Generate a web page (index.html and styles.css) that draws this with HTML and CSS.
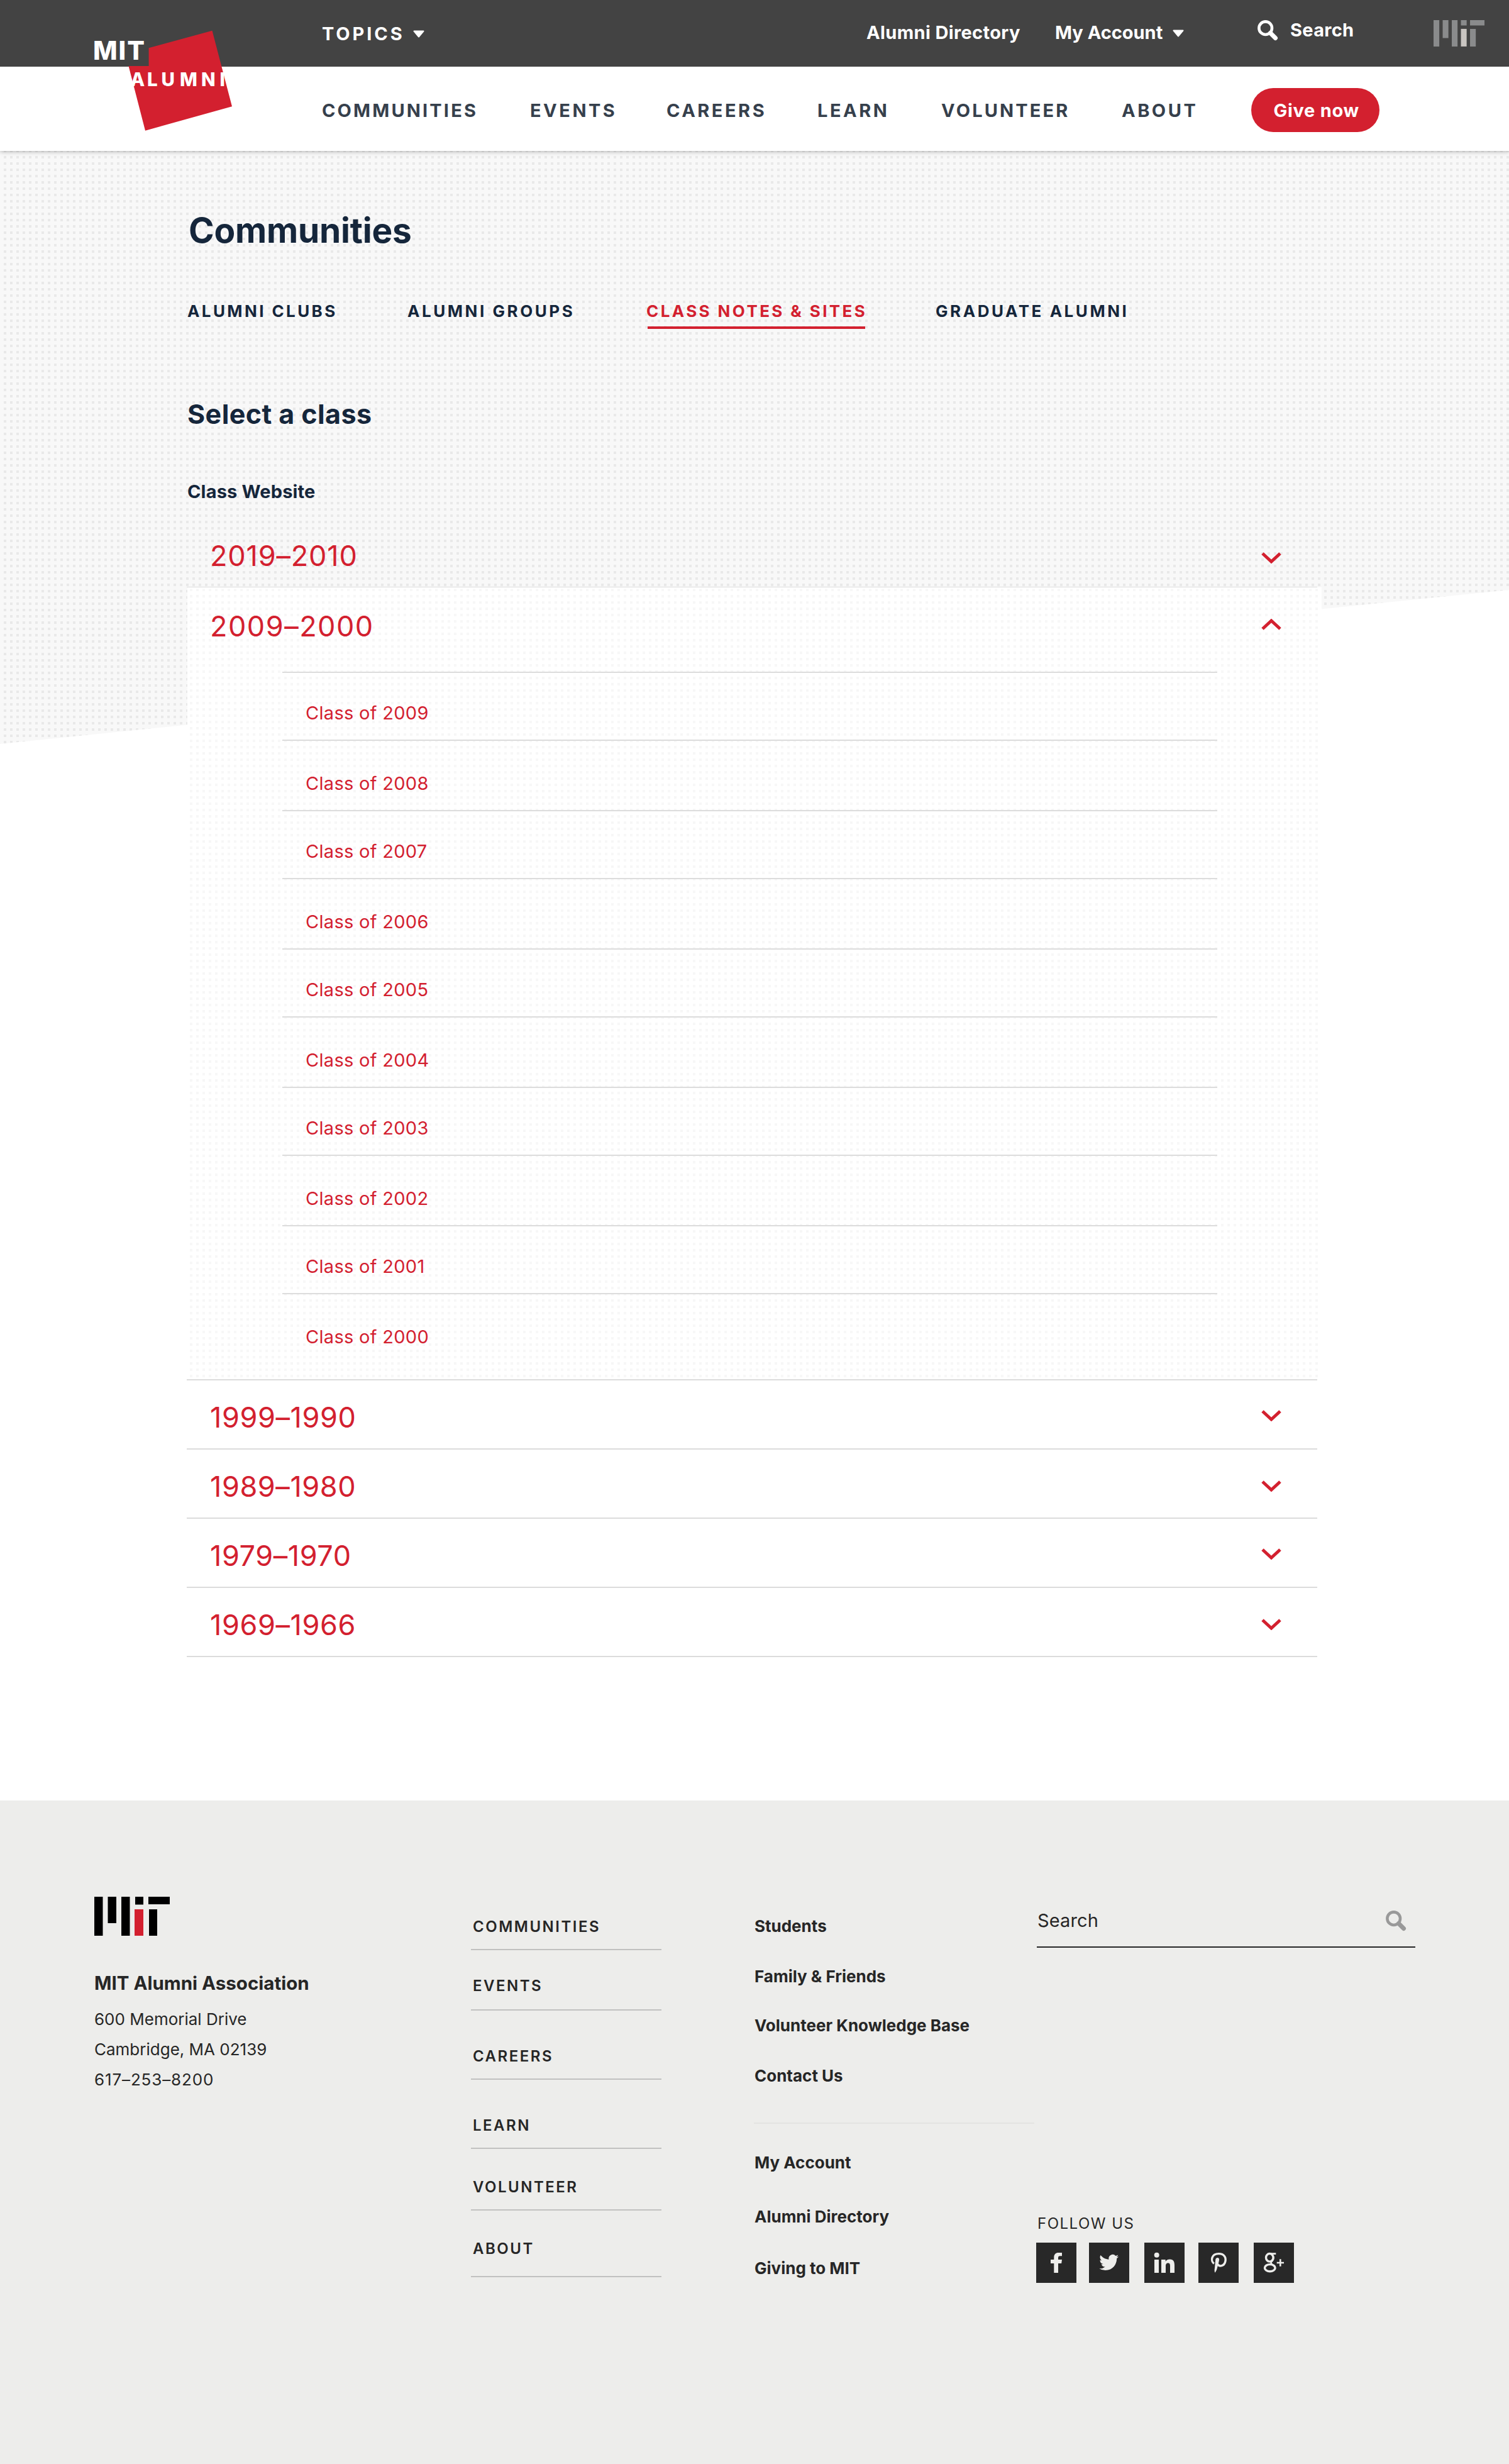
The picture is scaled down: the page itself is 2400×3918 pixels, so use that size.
FILE: index.html
```html
<!DOCTYPE html>
<html lang="en">
<head>
<meta charset="utf-8">
<title>Class Notes &amp; Sites | MIT Alumni</title>
<link rel="stylesheet" href="styles.css">
</head>
<body>
<header class="site-header">
  <div class="topbar">
    <a class="topbar-item topics"><span>TOPICS</span><svg class="caret" width="18" height="12" viewBox="0 0 18 12"><path d="M1.500 1.500h15L9 10.500z"/></svg></a>
    <a class="topbar-item directory"><span>Alumni Directory</span></a>
    <a class="topbar-item account"><span>My Account</span><svg class="caret" width="18" height="12" viewBox="0 0 18 12"><path d="M1.500 1.500h15L9 10.500z"/></svg></a>
    <a class="topbar-item search"><svg class="icon-search" width="33" height="33" viewBox="0 0 33 33"><circle cx="12.700" cy="12.700" r="10.300"/><path d="M20.500 20.500L28.500 28.500"/></svg><span>Search</span></a>
    <svg class="mit-mark mit-mark-muted" width="81" height="42" viewBox="0 0 120 62"><path d="M0 0h13.500v62H0zM21.500 0H35v42H21.500zM43 0h13.500v62H43zM64.500 0H78v12.500H64.500zM86 0h34v12.500H86zM86 20.500h13.500V62H86z"/><path class="mit-mark-accent" d="M64.500 20.500H78V62H64.500z"/></svg>
  </div>
  <nav class="main-nav">
    <a>COMMUNITIES</a><a>EVENTS</a><a>CAREERS</a><a>LEARN</a><a>VOLUNTEER</a><a>ABOUT</a>
    <a class="give">Give now</a>
  </nav>
  <svg class="logo" width="240" height="180" viewBox="140 40 240 180">
    <path class="logo-shape" d="M337.500 48.700L369 169.300 231 207.700 204.500 105h32.100V76.300z"/>
    <text class="logo-mit" x="148" y="94.500" textLength="82">MIT</text>
    <text class="logo-alumni" x="207.500 234 256.500 286 320 349.500" y="137">ALUMNI</text>
  </svg>
</header>

<main class="page">
  <h1>Communities</h1>
  <nav class="tabs">
    <a>ALUMNI CLUBS</a><a>ALUMNI GROUPS</a><a class="active">CLASS NOTES &amp; SITES</a><a>GRADUATE ALUMNI</a>
  </nav>
  <h2>Select a class</h2>
  <h3>Class Website</h3>
  <div class="accordion">
    <div class="row first"><span>2019–2010</span><svg class="chevron" width="32" height="18" viewBox="0 0 32 18"><path d="M2 2l14 13L30 2"/></svg></div>
    <div class="panel">
      <div class="row open"><span>2009–2000</span><svg class="chevron" width="32" height="18" viewBox="0 0 32 18"><path d="M2 16L16 3l14 13"/></svg></div>
      <ul class="classes">
        <li><a>Class of 2009</a></li>
        <li><a>Class of 2008</a></li>
        <li><a>Class of 2007</a></li>
        <li><a>Class of 2006</a></li>
        <li><a>Class of 2005</a></li>
        <li><a>Class of 2004</a></li>
        <li><a>Class of 2003</a></li>
        <li><a>Class of 2002</a></li>
        <li><a>Class of 2001</a></li>
        <li><a>Class of 2000</a></li>
      </ul>
    </div>
    <div class="row after-panel"><span>1999–1990</span><svg class="chevron" width="32" height="18" viewBox="0 0 32 18"><path d="M2 2l14 13L30 2"/></svg></div>
    <div class="row low"><span>1989–1980</span><svg class="chevron" width="32" height="18" viewBox="0 0 32 18"><path d="M2 2l14 13L30 2"/></svg></div>
    <div class="row"><span>1979–1970</span><svg class="chevron" width="32" height="18" viewBox="0 0 32 18"><path d="M2 2l14 13L30 2"/></svg></div>
    <div class="row low"><span>1969–1966</span><svg class="chevron" width="32" height="18" viewBox="0 0 32 18"><path d="M2 2l14 13L30 2"/></svg></div>
  </div>
</main>

<footer class="site-footer">
  <div class="contact">
    <svg class="mit-mark" width="120" height="62" viewBox="0 0 120 62"><path d="M0 0h13.500v62H0zM21.500 0H35v42H21.500zM43 0h13.500v62H43zM65 0H78v12.500H65zM86 0h34v12H86zM87 20h13V62H87z"/><path class="mit-mark-accent" d="M64 20H78V62H64z"/></svg>
    <strong>MIT Alumni Association</strong>
    <address><span>600 Memorial Drive</span><span>Cambridge, MA 02139</span><span class="phone">617–253–8200</span></address>
  </div>
  <ul class="sections">
    <li><a>COMMUNITIES</a></li>
    <li><a>EVENTS</a></li>
    <li><a>CAREERS</a></li>
    <li><a>LEARN</a></li>
    <li><a>VOLUNTEER</a></li>
    <li><a>ABOUT</a></li>
  </ul>
  <div class="links">
    <ul class="links-primary">
      <li>Students</li>
      <li>Family &amp; Friends</li>
      <li>Volunteer Knowledge Base</li>
      <li>Contact Us</li>
    </ul>
    <ul class="links-account">
      <li>My Account</li>
      <li>Alumni Directory</li>
      <li>Giving to MIT</li>
    </ul>
  </div>
  <div class="connect">
    <div class="footer-search"><span>Search</span><svg class="icon-search" width="33" height="33" viewBox="0 0 33 33"><circle cx="12.700" cy="12.700" r="10.300"/><path d="M20.500 20.500L28.500 28.500"/></svg></div>
    <p>FOLLOW US</p>
    <div class="social">
      <svg width="64" height="64" viewBox="0 0 64 64"><path d="M28.300 48V33H23v-6h5.300v-3.500c0-5 2.700-7.500 7.200-7.500H41v5.300h-3.200c-2.200 0-2.800 1-2.800 2.900V27h6l-.8 6H35v15z"/></svg>
      <svg width="64" height="64" viewBox="0 0 64 64"><path transform="translate(16.300 16) scale(1.290)" d="M23.950 4.570a10 10 0 0 1-2.820.77 4.960 4.960 0 0 0 2.160-2.720c-.95.550-2 .96-3.130 1.180a4.920 4.920 0 0 0-8.380 4.480C7.690 8.090 4.070 6.130 1.640 3.160a4.820 4.820 0 0 0-.67 2.480c0 1.710.87 3.210 2.190 4.100a4.900 4.900 0 0 1-2.230-.62v.06a4.920 4.920 0 0 0 3.950 4.830 5 5 0 0 1-2.210.08 4.940 4.940 0 0 0 4.600 3.420A9.870 9.870 0 0 1 0 19.540a13.990 13.990 0 0 0 7.560 2.210c9.050 0 14-7.500 14-13.980 0-.21 0-.42-.02-.63a9.940 9.940 0 0 0 2.410-2.570z"/></svg>
      <svg width="64" height="64" viewBox="0 0 64 64"><circle cx="19.700" cy="19.700" r="4"/><path d="M16 27h7v21h-7zM27 27h6.700v2.900c1-1.900 3.300-3.500 6.800-3.500 6 0 7.500 4 7.500 9.600v12h-7V37.300c0-2.700-.4-4.800-3.300-4.800-2.800 0-3.700 2.100-3.700 4.800V48h-7z"/></svg>
      <svg width="64" height="64" viewBox="0 0 64 64"><path class="line" d="M24.800 33.300C19 29 20.500 17.600 32.500 17.600c8.500 0 11.800 6 10.300 12.400-1.600 7.200-9.600 9.200-12.300 4"/><path d="M27.300 26.500c.6-3.400 6-3.600 5.800.5-.1 2.500-2.300 10-3.500 14.500-.6 2.300-1.800 4.500-3.300 6.300-.8-2-.9-4.500-.4-6.800z"/></svg>
      <svg width="64" height="64" viewBox="0 0 64 64"><ellipse class="line" cx="25.300" cy="23.800" rx="5.800" ry="6.300"/><path class="line thin" d="M26 17.600h9.300M28.800 19c3 3 3.700 7.300.4 10.200-2.600 2.200-2.200 3.600.2 5.300"/><ellipse class="line" cx="25.800" cy="40.200" rx="8.300" ry="5.600"/><path class="line thin" d="M36.700 32H48M42.300 26.300v11.400"/></svg>
    </div>
  </div>
</footer>
</body>
</html>
```
FILE: styles.css
```css
:root {
  --red: #d3202f;
  --navy: #15263b;
  --ink: #262626;
  --rule: #dcdcdc;
}

* { box-sizing: border-box; }

body {
  margin: 0;
  font-family: Inter, "Open Sans", sans-serif;
  background: #fff;
  color: var(--ink);
}

ul { list-style: none; margin: 0; padding: 0; }
h1, h2, h3, p { margin: 0; }
svg { display: block; flex: none; }

/* Header */
.site-header {
  position: relative;
  z-index: 1;
  background: #fff;
  box-shadow: 0 1px 7px rgba(0, 0, 0, .3);
}

.topbar {
  height: 106px;
  background: #434343;
  color: #fff;
  display: grid;
  grid-template-columns: 866px 300px 322px 280px 81px;
  padding-left: 512px;
}

.topbar-item {
  display: flex;
  align-items: flex-start;
  font-size: 29px;
  line-height: 36px;
  font-weight: 700;
  white-space: nowrap;
}

.topics { padding-top: 35.5px; letter-spacing: 3.9px; }
.directory { padding-top: 33.5px; letter-spacing: .37px; }
.account { padding-top: 33.5px; }
.search { padding-top: 29.5px; letter-spacing: .3px; }

.caret { fill: #fff; stroke: #fff; stroke-width: 2; stroke-linejoin: round; }
.topics .caret { margin: 12px 0 0 13px; }
.account .caret { margin: 13px 0 0 16px; }

.icon-search { fill: none; stroke: #fff; stroke-width: 4.6; }
.icon-search path { stroke-width: 7; stroke-linecap: round; }
.search .icon-search { margin: 2px 19px 0 0; }

.mit-mark { fill: #000; }
.mit-mark-accent { fill: var(--red); }
.mit-mark-muted { fill: #8a8b8c; margin-top: 32px; }
.mit-mark-muted .mit-mark-accent { fill: #c9c5c1; }

.main-nav {
  height: 134px;
  display: grid;
  grid-template-columns: 331px 217px 240px 197px 287px 206px 204px;
  padding-left: 512px;
  font-size: 29px;
  line-height: 36px;
  font-weight: 700;
  letter-spacing: 3.15px;
  color: #36404c;
}

.main-nav a { padding-top: 51.5px; }
.main-nav a:nth-child(n+2):nth-child(-n+4) { letter-spacing: 3.5px; }
.main-nav a:nth-child(6) { letter-spacing: 3.5px; }

.main-nav .give {
  margin-top: 34px;
  height: 70px;
  padding: 17.5px 0 0 35.5px;
  border-radius: 35px;
  background: var(--red);
  color: #fff;
  letter-spacing: .7px;
}

.logo {
  position: absolute;
  left: 140px;
  top: 40px;
  font-weight: 800;
}

.logo-shape { fill: var(--red); }
.logo text { fill: #fff; }
.logo-mit { font-size: 41px; }
.logo-alumni { font-size: 29.5px; }

/* Page */
.page {
  position: relative;
  height: 2623px;
  padding: 91px 0 0 298px;
  color: var(--navy);
}

.page::before {
  content: "";
  position: absolute;
  inset: 0 0 auto;
  height: 943px;
  z-index: -1;
  background: conic-gradient(at 4px 4px, #f8f8f8 270deg, #e9e9e9 0) 6px 8px / 10px 10px;
  clip-path: polygon(0 0, 100% 0, 100% 698px, 0 943px);
}

h1 { font-size: 55px; line-height: 70px; letter-spacing: -.2px; margin-left: 2px; }

.tabs {
  display: grid;
  grid-template-columns: 350px 380px 460px 400px;
  margin-top: 77.5px;
  font-size: 26px;
  line-height: 32px;
  font-weight: 700;
  letter-spacing: 3.55px;
}

.tabs a { height: 44px; white-space: nowrap; }
.tabs a:first-child { letter-spacing: 3.4px; }
.tabs .active {
  color: var(--red);
  letter-spacing: 3.4px;
  background: linear-gradient(var(--red), var(--red)) 2px 100% / 346px 4px no-repeat;
}

h2 { font-size: 43px; line-height: 52px; letter-spacing: .43px; margin-top: 109.5px; }
h3 { font-size: 29px; line-height: 36px; letter-spacing: .16px; margin-top: 79.5px; }

/* Accordion */
.accordion { margin: 24.5px 0 0 -1px; width: 1798px; color: var(--red); }

.row {
  height: 110px;
  display: flex;
  justify-content: space-between;
  align-items: flex-start;
  padding: 0 57px 0 37px;
  border-bottom: 2px solid var(--rule);
  font-size: 45px;
  line-height: 60px;
  letter-spacing: .6px;
}

.row span { margin-top: 28.5px; }
.row.first { border-bottom-width: 1px; letter-spacing: .85px; }
.row.first span { margin-top: 29.5px; }
.row.after-panel { height: 112px; border-top: 2px solid var(--rule); }

.chevron { margin-top: 47px; fill: none; stroke: currentColor; stroke-width: 5; }
.row.low .chevron { margin-top: 49px; }
.row.first .chevron { margin-top: 54px; }

.panel {
  width: 1804px;
  height: 1259px;
  margin-left: 1px;
  background: conic-gradient(at 4px 4px, #fff 270deg, #f7f7f7 0) 4px 2px / 10px 10px;
}

.row.open { height: 134px; padding: 0 64px 0 36px; border: 0; letter-spacing: 1.5px; }
.row.open span { margin-top: 31.5px; }
.row.open .chevron { margin-top: 50px; }

.classes {
  width: 1487px;
  margin-left: 151px;
  border-top: 2px solid var(--rule);
  font-size: 29px;
  line-height: 36px;
  letter-spacing: .3px;
}

.classes li { height: 112px; padding: 49.5px 0 0 37px; border-bottom: 2px solid var(--rule); }
.classes li:nth-child(odd) { height: 108px; padding-top: 45.5px; }
.classes li:last-child { border-bottom: 0; }

/* Footer */
.site-footer {
  height: 1055px;
  display: grid;
  grid-template-columns: 599px 450px 450px 602px;
  align-items: start;
  padding: 1px 0 0 150px;
  background: #ededeb;
}

.contact { padding-top: 152px; }
.contact strong { display: block; margin-top: 57px; font-size: 29.5px; line-height: 36px; }

address { margin-top: 15.5px; font-style: normal; font-size: 26px; line-height: 48px; }
address span { display: block; }
address .phone { letter-spacing: .87px; }

.sections {
  width: 303px;
  padding-top: 184px;
  font-size: 24px;
  line-height: 30px;
  font-weight: 600;
  letter-spacing: 2.5px;
}

.sections li { height: 110px; padding: 57.5px 0 0 3px; border-bottom: 2px solid #c1c1c0; }
.sections li:nth-child(1) { height: 53px; padding-top: .5px; }
.sections li:nth-child(2) { height: 96px; padding-top: 41.5px; }
.sections li:nth-child(5) { height: 98px; padding-top: 45.5px; }
.sections li:nth-child(6) { height: 106px; padding-top: 45.5px; }

.links { padding-top: 183px; font-size: 26px; line-height: 32px; font-weight: 700; }
.links-primary {
  display: grid;
  grid-template-rows: 80px 78px 80px 32px;
  width: 446px;
  height: 330px;
  border-bottom: 2px solid #e3e3e1;
}
.links-account { display: grid; grid-template-rows: 86px 82px 32px; padding-top: 46px; }
.links li { padding-left: 1px; }

.connect { padding-top: 166px; }

.footer-search {
  display: flex;
  justify-content: space-between;
  align-items: flex-start;
  height: 67px;
  padding: 5.5px 14px 0 1px;
  border-bottom: 2px solid var(--ink);
  font-size: 29px;
  line-height: 36px;
  letter-spacing: .15px;
}

.footer-search .icon-search { stroke: #999; margin-top: 2.5px; }

.connect p { margin-top: 423.5px; padding-left: 1px; font-size: 24px; line-height: 30px; letter-spacing: 1.5px; }

.social { display: flex; margin: 15.5px 0 0 -1px; }
.social svg { background: #282828; fill: #ededeb; margin-right: 20px; }
.social svg:nth-child(2) { margin-right: 24px; }
.social svg:nth-child(3) { margin-right: 22px; }
.social svg:nth-child(4) { margin-right: 24px; }
.social .line { fill: none; stroke: #ededeb; stroke-width: 3.4; }
.social .thin { stroke-width: 2.6; }
```
